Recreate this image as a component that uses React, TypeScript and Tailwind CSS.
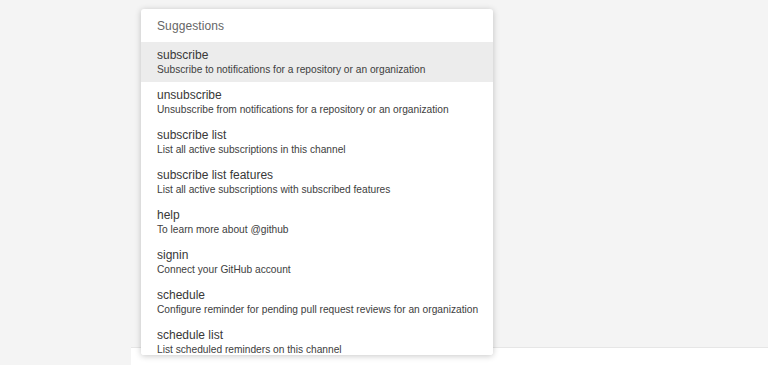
import * as React from 'react';

const suggestions = [
  { name: 'subscribe', desc: 'Subscribe to notifications for a repository or an organization' },
  { name: 'unsubscribe', desc: 'Unsubscribe from notifications for a repository or an organization' },
  { name: 'subscribe list', desc: 'List all active subscriptions in this channel' },
  { name: 'subscribe list features', desc: 'List all active subscriptions with subscribed features' },
  { name: 'help', desc: 'To learn more about @github' },
  { name: 'signin', desc: 'Connect your GitHub account' },
  { name: 'schedule', desc: 'Configure reminder for pending pull request reviews for an organization' },
  { name: 'schedule list', desc: 'List scheduled reminders on this channel' },
];

const App: React.FC = () => {
  return (
    <div
      className="relative flex flex-col h-[365px] w-[768px] overflow-hidden bg-[#f4f4f4]"
      style={{ fontFamily: '"Liberation Sans", Arial, sans-serif' }}
    >
      <div className="mt-auto ml-[131px] h-[18px] bg-white border-t border-[#e6e6e6]" />

      <div className="absolute left-[141px] top-[9px] w-[352px] h-[346px] bg-white rounded-[3px] overflow-hidden shadow-[0_1px_6px_rgba(0,0,0,0.22)]">
        <div className="h-[33px] pl-[16px] flex items-center text-[12px] tracking-[0.1px] text-[#666666]">Suggestions</div>
        {suggestions.map((s, i) => (
          <div
            key={s.name}
            className={`h-[40px] pl-[16px] pt-[6px] ${i === 0 ? 'bg-[#ececec]' : 'bg-white'}`}
          >
            <div className="text-[12px] leading-[15px] text-[#383838]">{s.name}</div>
            <div className="text-[10.2px] leading-[13px] text-[#404040]">{s.desc}</div>
          </div>
        ))}
      </div>
    </div>
  );
};

export default App;
